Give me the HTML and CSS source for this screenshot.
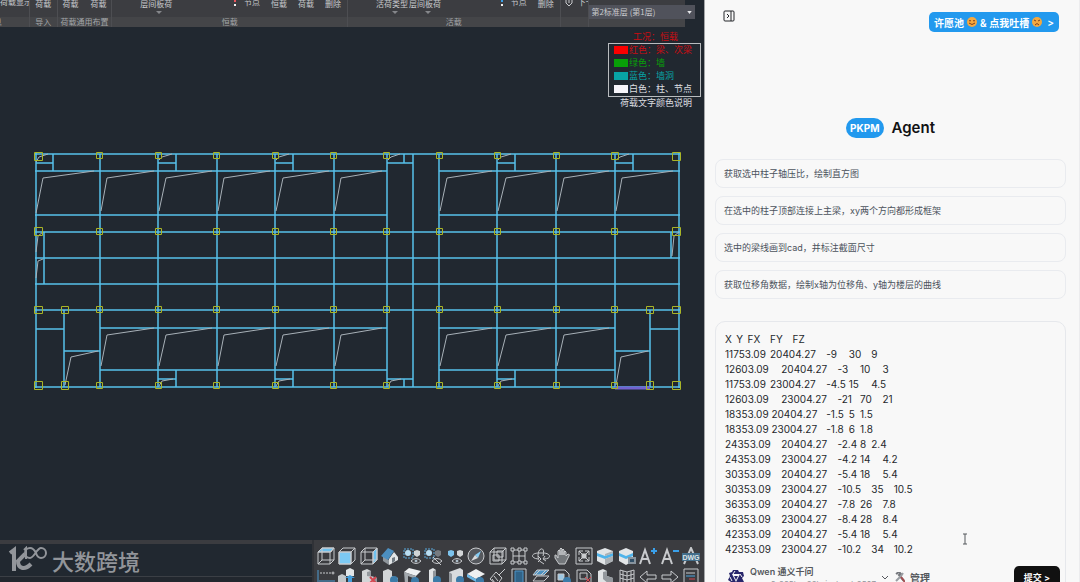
FILE: index.html
```html
<!DOCTYPE html>
<html lang="zh-CN">
<head>
<meta charset="utf-8">
<meta name="viewport" content="width=device-width, initial-scale=1">
<title>PKPM Agent</title>
<link rel="stylesheet" href="styles.css">
</head>
<body>
<div class="app">
  <main class="cad">
    <header class="ribbon">
      <div class="groups">
        <section class="group g-show"><div class="tools"><button class="tool cut">荷载显示</button></div><h2 class="caption left">息</h2></section>
        <section class="group g-import"><div class="tools center"><button class="tool">荷载</button></div><h2 class="caption">导入</h2></section>
        <section class="group g-common"><div class="tools center spaced"><button class="tool">荷载</button><button class="tool">荷载</button></div><h2 class="caption">荷载通用布置</h2></section>
        <section class="group g-dead">
          <div class="tools end">
            <button class="tool drop first">层间板荷</button>
            <button class="tool node dots red">节点</button><button class="tool">恒载</button><button class="tool">荷载</button><button class="tool">删除</button>
          </div>
          <h2 class="caption">恒载</h2>
        </section>
        <section class="group g-live">
          <div class="tools end">
            <div class="pair"><button class="tool drop">活荷类型</button><button class="tool drop">层间板荷</button></div>
            <button class="tool node dots blue">节点</button><button class="tool">删除</button>
          </div>
          <h2 class="caption">活载</h2>
        </section>
        <section class="group g-next"><div class="tools next"><svg class="diamond" viewBox="0 0 8 8"><path d="M1 0v3l3 3 3-3V0M4 0v3" fill="none" stroke="#c8cacd"/></svg><button class="tool cut">下一</button></div><h2 class="caption"></h2></section>
        <section class="group g-floor"><div class="tools"></div><h2 class="caption"></h2></section>
      </div>
      <select class="floor" aria-label="标准层"><option>第2标准层 (第1层)</option></select>
      <svg class="floor-arrow" viewBox="0 0 6 4"><path d="M0 0h6L3 4z" fill="#e6e8ea"/></svg>
    </header>

    <div class="canvas">
      <svg class="plan" viewBox="0 27 704 513" role="img" aria-label="结构平面图">
        <g class="halo">
          <path d="M35 154H680M35 171H387M439 171H680M35 215H387M439 215H680M35 232H680M35 258H680M35 284H680M35 310H680M100 328H387M439 328H615M100 370H387M439 370H615M35 387H680"/>
          <path d="M36 153V388M100 154V387M158 154V387M217 154V387M275 154V387M334 154V387M387 154V387M413 154V387M439 154V387M497 154V387M556 154V387M615 154V387M679 153V388"/>
          <path d="M53 154V171M36 163H53M176 154V171M158 163H176M293 154V171M275 163H293M404 154V163M387 163H413M515 154V171M497 163H515M633 154V171M615 163H633"/>
          <path d="M176 370V387M158 379H176M293 370V387M275 379H293M404 379V387M387 379H413M515 370V387M497 379H515"/>
          <path d="M44 232V284M671 232V258M64 310V387M36 329H64M64 351H100M650 310V387M650 329H679M615 351H650"/>
        </g>
        <g class="slabs">
          <path d="M36 213L43 178 94 171M101 211L107 178 154 171M159 211L166 178 212 171M218 211L224 178 270 171M276 211L283 178 329 171M335 211L341 178 382 171M440 211L447 178 492 171M498 211L506 178 551 171M557 211L564 178 609 171M616 211L622 178 673 171"/>
          <path d="M101 366L107 335 154 328M159 366L166 335 212 328M218 366L224 335 270 328M276 366L283 335 329 328M335 366L341 335 382 328M440 366L447 335 492 328M498 366L506 335 551 328M557 366L564 335 609 328M65 385L71 357 98 351M616 385L621 357 648 351"/>
          <path d="M36 162L39 157 48 154M159 160L162 157 172 154M276 160L279 157 289 154M388 160L391 157 400 154M498 160L501 157 511 154M616 160L620 157 629 154M159 386L162 381 173 379M276 386L279 381 290 379M388 386L391 381 401 379M498 386L501 381 512 379M36 252L38 236 43 232M36 278L38 261 43 259M672 256L674 236 679 232"/>
        </g>
        <path class="picked" d="M615 388H650"/>
        <g class="joints">
          <path d="M96 152h6v6h-6zM155 152h6v6h-6zM213 152h6v6h-6zM272 152h6v6h-6zM330 152h6v6h-6zM383 152h6v6h-6zM436 152h6v6h-6zM494 152h6v6h-6zM553 152h6v6h-6zM611 152h7v7h-7z"/>
          <path d="M96 228h6v6h-6zM155 228h6v6h-6zM213 228h6v6h-6zM272 228h6v6h-6zM330 228h6v6h-6zM383 228h6v6h-6zM436 228h6v6h-6zM494 228h6v6h-6zM553 228h6v6h-6zM611 228h6v6h-6z"/>
          <path d="M96 306h6v6h-6zM155 306h6v6h-6zM213 306h6v6h-6zM272 306h6v6h-6zM330 306h6v6h-6zM383 306h6v6h-6zM436 306h6v6h-6zM494 306h6v6h-6zM553 306h6v6h-6zM611 306h6v6h-6z"/>
          <path d="M96 382h6v6h-6zM155 382h6v6h-6zM213 382h6v6h-6zM272 382h6v6h-6zM330 382h6v6h-6zM383 382h6v6h-6zM436 382h6v6h-6zM494 382h6v6h-6zM553 382h6v6h-6zM611 382h6v6h-6z"/>
          <path d="M34 152h8v8h-8zM34 227h8v8h-8zM34 306h8v7h-8zM34 381h8v8h-8zM61 306h7v7h-7zM61 381h7v8h-7zM672 152h8v8h-8zM672 227h8v8h-8zM672 306h8v7h-8zM672 381h8v8h-8zM646 306h7v7h-7zM646 381h7v8h-7z"/>
        </g>
      </svg>
      <aside class="legend">
        <p class="case">工况：恒载</p>
        <ul class="keys">
          <li class="key beam">红色：梁、次梁</li>
          <li class="key wall">绿色：墙</li>
          <li class="key hole">蓝色：墙洞</li>
          <li class="key column">白色：柱、节点</li>
        </ul>
        <p class="note">荷载文字颜色说明</p>
      </aside>
    </div>

    <footer class="dock">
      <div class="command">
        <div class="history">
          <svg class="mark" viewBox="0 0 40 28" fill="none" stroke="#92959a">
            <path d="M2 7L6 4V25" stroke-width="4"/>
            <path d="M17 8L10 15C10 22 16 25 23 18" stroke-width="4"/>
            <path d="M16 4L18 2V13" stroke-width="2"/>
            <path d="M28 7C26 3 24 2 22 2A5 5 0 1 0 22 12C26 12 29 2 33 2A5 5 0 1 1 33 12C31 12 29 10 28 7" stroke-width="2"/>
          </svg>
          <span class="brand">大数跨境</span>
        </div>
      </div>
      <div class="views">
        <button aria-label="俯视"><svg viewBox="0 0 18 18"><path d="M1 5L5 1H17L14 5Z" fill="#6ec1ee"/><path d="M1 5H13V17H1ZM1 5L5 1H17V13L13 17M13 5L17 1M5 1V13H17M1 17L5 13"/></svg></button>
        <button aria-label="前视"><svg viewBox="0 0 18 18"><path d="M1 5H13V17H1Z" fill="#7cc9f3"/><path d="M1 5H13V17H1ZM1 5L5 1H17V13L13 17M13 5L17 1"/></svg></button>
        <button aria-label="右视"><svg viewBox="0 0 18 18"><path d="M13 5L17 1V13L13 17Z" fill="#6ec1ee"/><path d="M1 5H13V17H1ZM1 5L5 1H17V13L13 17M13 5L17 1M5 1V13H17M1 17L5 13"/></svg></button>
        <button aria-label="主视图"><svg viewBox="0 0 18 18" stroke="none"><path d="M2 9L8 13V18L2 14Z" fill="#8f969c"/><path d="M8 12L13 5 17 10V13L8 18Z" fill="#e2e5e7"/><path d="M0 9L7 1 13 4 7 13Z" fill="#4c8fc0"/><path d="M11 11l3-1v4l-3 2z" fill="#707981"/></svg></button>
        <button aria-label="隔离"><svg viewBox="0 0 18 18"><rect x="1" y="2" width="9" height="9" stroke="#5aa9dc" stroke-dasharray="2 1"/><circle cx="5" cy="6" r="3" fill="#b9def2" stroke="none"/><path d="M11 4l3-1 3 1v4l-3 2-3-2z" fill="#d2d5d7" stroke="none"/><path d="M8 14q5-5 10 0q-5 5-10 0z"/><circle cx="13" cy="14" r="1" fill="#5ab4ed"/></svg></button>
        <button aria-label="隐藏"><svg viewBox="0 0 18 18"><rect x="1" y="2" width="9" height="9" stroke="#5aa9dc" stroke-dasharray="2 1"/><circle cx="5" cy="6" r="3" fill="#b9def2" stroke="none"/><path d="M11 4l3-1 3 1v4l-3 2-3-2z" fill="#777b80" stroke="none"/><path d="M8 14q5-5 10 0q-5 5-10 0zM9 10l8 8"/></svg></button>
        <button aria-label="显示全部"><svg viewBox="0 0 18 18"><path d="M2 4l3-1 3 1v4l-3 2-3-2z" fill="#7dc4ee" stroke="none"/><path d="M11 4l3-1 3 1v4l-3 2-3-2z" fill="#d2d5d7" stroke="none"/><path d="M6 14q5-5 10 0q-5 5-10 0z"/><circle cx="11" cy="14" r="1" fill="#5ab4ed"/></svg></button>
        <button aria-label="导航"><svg viewBox="0 0 18 18"><circle cx="9" cy="9" r="8" fill="#55585d"/><path d="M14 4L11 11 8 8Z" fill="#86cdf5" stroke="none"/><path d="M4 14L8 8 11 11Z" fill="#d8dadc" stroke="none"/></svg></button>
        <button aria-label="线框"><svg viewBox="0 0 18 18"><path d="M1 5H13V17H1ZM1 5L5 1H17V13L13 17M13 5L17 1M4 8H10V14H4ZM5 1V13H17M8 4H14V10H8Z"/></svg></button>
        <button aria-label="夹点"><svg viewBox="0 0 18 18"><path d="M3 3H15V15H3ZM9 3V15M3 9H15"/><path d="M1 1h3v3H1zM14 1h3v3h-3zM1 14h3v3H1zM14 14h3v3h-3zM8 1h3v3H8zM8 14h3v3H8z" fill="#3b3c40"/></svg></button>
        <button aria-label="动态观察"><svg viewBox="0 0 18 18"><path d="M6 12C-2 11-1 6 7 6H11C19 6 20 12 12 12M9 15C5 14 5 3 9 2C12 1 12 6 11 9M6 9l3 3-3 3M9 15l3 2M13 9l-2 3 3 2"/></svg></button>
        <button aria-label="平移"><svg viewBox="0 0 18 18"><path d="M5 11V4q1-2 2 0V8 2q1-2 2 0V8 3q1-2 2 0V8 5q1-2 2 0V9l2-2q2 0 1 2l-4 8H6L2 11V8q1-1 3 3" fill="#73777b"/></svg></button>
        <button aria-label="全图"><svg viewBox="0 0 18 18"><path d="M1 1H17V17H1ZM4 8V4H8M4 4l4 4M10 4h4v4M14 4l-4 4M4 10v4h4M4 14l4-4M14 10v4h-4M14 14l-4-4"/><path d="M7 7h4v4H7z" fill="#c8cacd"/></svg></button>
        <button aria-label="楼层"><svg viewBox="0 0 18 18" stroke="none"><path d="M1 4L9 1 17 4V14L9 18 1 14Z" fill="#e2e5e7"/><path d="M1 6L9 9V12L1 9ZM9 9L17 6V9L9 12Z" fill="#4fb3ea"/><path d="M9 7V9L17 6V4ZM9 12V18L17 14V9Z" fill="#abb0b4"/></svg></button>
        <button aria-label="楼层组装"><svg viewBox="0 0 18 18" stroke="none"><path d="M1 4L8 1 15 4V14L8 18 1 14Z" fill="#e2e5e7"/><path d="M1 6L8 9V12L1 9ZM8 9L15 6V9L8 12Z" fill="#4fb3ea"/><path d="M10 10h8v7h-8z" fill="#87939d"/><path d="M12 12h4v3h-4z" fill="#315068"/></svg></button>
        <button aria-label="增大字号"><svg viewBox="0 0 18 18"><path d="M1 17L6 3 11 17M3 12H9" stroke-width="2"/><path d="M12 4h6M15 1v6" stroke="#3aa0ea" stroke-width="2"/></svg></button>
        <button aria-label="减小字号"><svg viewBox="0 0 18 18"><path d="M1 17L6 3 11 17M3 12H9" stroke-width="2"/><path d="M12 4h6" stroke="#3aa0ea" stroke-width="2"/></svg></button>
        <button aria-label="导出DWG"><svg viewBox="0 0 18 18"><path d="M2 17L9 1 16 17" stroke-width="2"/><path d="M0 6h18v8H0z" fill="#426e8b" stroke="none"/><text x="9" y="13" class="dwg">DWG</text></svg></button>

        <button aria-label="标尺"><svg viewBox="0 0 18 18"><path d="M1 2V18M2 13H18" stroke="#4e9bd2"/><path d="M3 5H14" stroke-dasharray="2 1"/><circle cx="16" cy="5" r="1"/></svg></button>
        <button aria-label="节点显示"><svg viewBox="0 0 18 18" stroke="none"><path d="M8 2l4-2 4 2v6H8z" fill="#e2e5e7"/><path d="M0 8l4-2 4 2v6H0z" fill="#c3c7ca"/><path d="M12 7l5 3h-3v5h-4v-5H7z" fill="#459edb"/></svg></button>
        <button aria-label="删除构件"><svg viewBox="0 0 18 18" stroke="none"><path d="M2 3l5-2 4 2v5l6 2v6H2z" fill="#d2d5d7"/><path d="M11 3v5l6 2v6h-4V9L7 8V4z" fill="#93989d"/><path d="M10 9l6 6m0-6l-6 6" stroke="#d44650" stroke-width="2"/></svg></button>
        <button aria-label="构件"><svg viewBox="0 0 18 18" stroke="none"><path d="M2 3l5-2 4 2v5l6 2v6H2z" fill="#d2d5d7"/><circle cx="13" cy="12" r="4" fill="#3c7ba8"/></svg></button>
        <button aria-label="梁"><svg viewBox="0 0 18 18" stroke="none"><path d="M1 4L6 0 18 3 13 8Z" fill="#eef0f1"/><path d="M1 4L13 8V11L5 8V16H2Z" fill="#a3a9ae"/><circle cx="12" cy="13" r="4" fill="#3c7ba8"/></svg></button>
        <button aria-label="柱"><svg viewBox="0 0 18 18" stroke="none"><path d="M5 2l4-2 3 2v14H5z" fill="#e2e5e7"/><path d="M9 3l3-1v14H9z" fill="#92979c"/><circle cx="13" cy="12" r="4" fill="#3c7ba8"/></svg></button>
        <button aria-label="墙"><svg viewBox="0 0 18 18" stroke="none"><path d="M3 4L14 0 17 2V13L3 18Z" fill="#d9dcde"/><path d="M3 4L6 6V18H3Z" fill="#92979c"/><circle cx="14" cy="12" r="4" fill="#3c7ba8"/></svg></button>
        <button aria-label="板"><svg viewBox="0 0 18 18" stroke="none"><path d="M0 6L9 1 18 6 9 11Z" fill="#eef0f1"/><path d="M0 6L9 11V14L0 9Z" fill="#6cb7e5"/><circle cx="13" cy="13" r="4" fill="#3c7ba8"/></svg></button>
        <button aria-label="格式刷"><svg viewBox="0 0 18 18"><path d="M16 1L10 7M7 4L13 10 8 17 1 11ZM5 8l4 5M3 11l3 4"/></svg></button>
        <button aria-label="门洞"><svg viewBox="0 0 18 18"><path d="M2 1H16V18H2Z"/><path d="M5 3H13V18H5Z" fill="#316387" stroke="#4c94c7"/></svg></button>
        <button aria-label="坡面"><svg viewBox="0 0 18 18"><path d="M1 7L5 2H17L12 7Z" fill="#4d91bf"/><path d="M1 13L5 8H17L12 13ZM8 2L3 7M14 2L9 7"/></svg></button>
        <button aria-label="图纸"><svg viewBox="0 0 18 18"><path d="M2 2H12L16 6V18H2Z"/><path d="M5 6h6v6H5z" fill="#9dc8e4"/><circle cx="14" cy="13" r="4" fill="#3c7ba8" stroke="none"/></svg></button>
        <button aria-label="关闭图纸"><svg viewBox="0 0 18 18"><path d="M2 2H12L16 6V18H2ZM5 5h7v6H5z"/><path d="M10 9l6 6m0-6l-6 6" stroke="#d44650"/></svg></button>
        <button aria-label="台阶"><svg viewBox="0 0 18 18" stroke="none"><path d="M2 3l5-2 4 2v5l6 2v6H2z" fill="#e0e3e5"/><path d="M7 4l4-1v5l6 2v6h-4l-6-5z" fill="#93989d"/></svg></button>
        <button aria-label="网格"><svg viewBox="0 0 18 18"><path d="M2 2L9 4 16 2V17H2ZM2 6L9 8 16 6M2 10L9 12 16 10M9 4V17M5 3V17M13 3V17"/></svg></button>
        <button aria-label="后退"><svg viewBox="0 0 18 18"><path d="M1 9L8 3V7H17V11H8V15Z"/></svg></button>
        <button aria-label="前进"><svg viewBox="0 0 18 18"><path d="M17 9L10 3V7H1V11H10V15Z"/></svg></button>
        <button aria-label="列表"><svg viewBox="0 0 18 18"><path d="M2 1H16V18H2ZM4 5H13"/><path d="M4 8H13" stroke="#4ca4df"/><path d="M7 11H13" stroke="#d44650"/></svg></button>
      </div>
    </footer>
  </main>

  <aside class="agent">
    <header class="bar">
      <button class="collapse" aria-label="收起侧栏"><svg viewBox="0 0 12 12" fill="none" stroke="#24262a"><rect x="1" y="1" width="10" height="10" rx="1"/><path d="M8 1V11M4 4L6 6 4 8"/></svg></button>
      <a class="wish" href="#wish">许愿池<svg class="face" viewBox="0 0 10 10"><circle cx="5" cy="5" r="5" fill="#f4a83f"/><path d="M2 4q1-1 2 0M6 4q1-1 2 0M2 6q3 3 6 0" fill="none" stroke="#7d3f1c"/></svg>
        &amp; 点我吐槽<svg class="face" viewBox="0 0 10 10"><circle cx="5" cy="5" r="5" fill="#f4a83f"/><path d="M2 3l2 1M8 3L6 4M3 8q2-3 4 0" fill="none" stroke="#7d3f1c"/></svg>
        <span class="more">&gt;</span></a>
    </header>

    <h1 class="title"><span class="pill">PKPM</span>Agent</h1>

    <div class="prompts">
      <button class="prompt">获取选中柱子轴压比，绘制直方图</button>
      <button class="prompt">在选中的柱子顶部连接上主梁，xy两个方向都形成框架</button>
      <button class="prompt">选中的梁线画到cad，并标注截面尺寸</button>
      <button class="prompt">获取位移角数据，绘制x轴为位移角、y轴为楼层的曲线</button>
    </div>

    <form class="composer">
      <textarea class="entry" rows="15" aria-label="输入内容" spellcheck="false">X	Y	FX	FY	FZ
11753.09	20404.27	-9	30	9
12603.09	20404.27	-3	10	3
11753.09	23004.27	-4.5	15	4.5
12603.09	23004.27	-21	70	21
18353.09 20404.27	-1.5	5	1.5
18353.09 23004.27	-1.8	6	1.8
24353.09	20404.27	-2.4	8	2.4
24353.09	23004.27	-4.2	14	4.2
30353.09	20404.27	-5.4	18	5.4
30353.09	23004.27	-10.5	35	10.5
36353.09	20404.27	-7.8	26	7.8
36353.09	23004.27	-8.4	28	8.4
42353.09	20404.27	-5.4	18	5.4
42353.09	23004.27	-10.2	34	10.2</textarea>
      <div class="actions">
        <button type="button" class="model">
          <svg class="qwen" viewBox="0 0 18 18"><path d="M6 1H11L12 3H16L17 7 15 9 17 13 14 16H10L8 17 5 16 4 13 1 11 3 7 2 4 5 3Z" fill="#28266b"/><path d="M5 5H13L9 13Z" fill="#f8f8f8"/><path d="M8 2L6 5M3 8l2 4M15 8l-2-3M9 14h4" fill="none" stroke="#f8f8f8"/><path d="M7 7h4l-2 4z" fill="#28266b"/></svg>
          <span class="names"><strong>Qwen 通义千问</strong><small>qwen3-235b-a22b-instruct-2507</small></span>
          <svg class="chevron" viewBox="0 0 8 8"><path d="M1 2l3 3 3-3" fill="none" stroke="#55585d"/></svg>
        </button>
        <button type="button" class="manage"><svg class="kit" viewBox="0 0 10 10"><path d="M1 2l3-2 2 2-2 1 5 6" fill="none" stroke="#74777c" stroke-width="2"/><path d="M8 1L6 4 1 9" fill="none" stroke="#9a9ea3" stroke-width="2"/><path d="M6 5l4 5" stroke="#a34d50" stroke-width="2"/></svg>管理</button>
        <button type="submit" class="submit">提交 &gt;</button>
      </div>
      <svg class="ibeam" viewBox="0 0 6 12"><path d="M1 1h4M3 1v10M1 11h4" fill="none" stroke="#55585d"/></svg>
    </form>
  </aside>
</div>
</body>
</html>
```
FILE: styles.css
```css
* { box-sizing: border-box; }

body {
  margin: 0;
  background: #f8f8f8;
  font-family: Inter, "Noto Sans CJK SC", sans-serif;
}

button {
  margin: 0;
  padding: 0;
  border: 0;
  background: none;
  color: inherit;
  font: inherit;
}

h1, h2, p, ul { margin: 0; padding: 0; font-weight: normal; }

svg { display: block; }

.app {
  display: grid;
  grid-template-columns: 705fr 375fr;
  grid-template-rows: minmax(0, 1fr);
  height: 100vh;
  overflow: hidden;
}

/* Drawing editor */

.cad {
  display: grid;
  grid-template-columns: minmax(0, 1fr);
  grid-template-rows: 27px minmax(0, 1fr) 42px;
  min-width: 0;
  background: #212830;
  border-right: 1px solid #a4a6a8;
  font-family: "Noto Sans CJK SC", sans-serif;
}

.ribbon {
  position: relative;
  overflow: hidden;
  color: #c8cacd;
  font-size: 8px;
}

.groups {
  display: flex;
  width: 97.3%;
  height: 100%;
}

.group {
  display: grid;
  grid-template-rows: 17px 10px;
  min-width: 0;
  background: #3c3d41;
  border-right: 1px solid #4d4e52;
  overflow: hidden;
}

.g-show { flex: 29 0 0; }
.g-import { flex: 27 0 0; }
.g-common { flex: 54 0 0; }
.g-dead { flex: 236 0 0; }
.g-live { flex: 213 0 0; }
.g-next { flex: 27 0 0; }
.g-floor { flex: 97 0 0; border-right: 0; }

.tools { display: flex; height: 17px; white-space: nowrap; }
.tools.center { justify-content: center; }
.tools.spaced { gap: 12px; }
.tools.end { justify-content: flex-end; gap: 11px; padding-right: 6px; }
.tools.next { gap: 5px; padding-left: 4px; }

.tool {
  display: flex;
  position: relative;
  flex: none;
  height: 8px;
  line-height: 8px;
}

.tool.cut, .tool.node { height: 4px; line-height: 4px; }
.tool.first, .pair { margin: 0 auto 0 28px; }
.pair { display: flex; gap: 1px; }

.drop::after {
  content: "";
  position: absolute;
  top: 11px;
  left: 50%;
  border: 3px solid transparent;
  border-top-color: #85878b;
}

.dots::before {
  content: "";
  width: 2px;
  height: 6px;
  margin-right: 8px;
  background: linear-gradient(#e8555b 2px, transparent 2px 4px, #f2f2f2 4px);
}

.dots.blue::before { background: linear-gradient(#3aa0ea 2px, transparent 2px 4px, #f2f2f2 4px); }

.diamond { width: 8px; height: 8px; }

.caption {
  background: #444548;
  color: #a3a5a8;
  font-size: 8px;
  line-height: 10px;
  text-align: center;
  white-space: nowrap;
}

.caption.left { text-align: left; text-indent: -6px; }

.floor {
  position: absolute;
  top: 5px;
  right: 9px;
  width: 15%;
  height: 14px;
  padding: 0 2px;
  border: 0;
  border-radius: 0;
  appearance: none;
  background: #50525b;
  color: #c8cacd;
  font: 8px/14px "Noto Sans CJK SC", sans-serif;
}

.floor-arrow { position: absolute; top: 11px; right: 12px; width: 5px; height: 3px; }

.canvas { position: relative; min-height: 0; }
.plan { width: 100%; height: 100%; fill: none; }
.halo { stroke: #57c1ea; stroke-width: 1.5; }
.slabs { stroke: #a8b1b8; stroke-width: 1; }
.joints { stroke: #a9b527; stroke-width: 1; }
.joints path { transform: translate(0.5px, 0.5px); }
.picked { stroke: #7262cf; stroke-width: 3; }

.legend {
  position: absolute;
  top: 4px;
  right: 3px;
  width: 93px;
  color: #dcdee0;
  font-size: 9px;
  line-height: 12px;
}

.case { padding-left: 25px; color: #c90d12; }
.keys { border: 1px solid #b9bcbf; list-style: none; }
.key { display: flex; align-items: center; height: 13px; padding: 0 0 1px 5px; }

.key::before {
  content: "";
  width: 14px;
  height: 8px;
  margin-right: 1px;
  background: currentColor;
}

.beam { color: #c90d12; }
.beam::before { background: #fb0000; }
.wall { color: #08a008; }
.hole { color: #08a3a5; }
.column::before { background: #f7f5fa; }
.note { padding-left: 12px; }

.dock {
  display: grid;
  grid-template-columns: 314fr 390fr;
  min-width: 0;
  background: #3b3c40;
  overflow: hidden;
}

.command { padding-top: 4px; background: #3b3c40; border-right: 2px solid #303237; }

.history {
  display: flex;
  align-items: center;
  gap: 4px;
  height: 33px;
  padding-left: 8px;
  background: #212830;
  border-bottom: 1px solid #3b3f45;
}

.command::after { content: ""; display: block; height: 8px; background: #22272e; }
.mark { width: 40px; height: 28px; }
.brand { color: #92959a; font-size: 22px; font-weight: 500; line-height: 32px; }

.views {
  display: grid;
  grid-template-columns: repeat(18, minmax(0, 1fr));
  grid-auto-rows: 18px;
  gap: 3px 0;
  justify-items: center;
  padding: 7px 2px 0 1px;
}

.views svg { width: 18px; height: 18px; fill: none; stroke: #c8cacd; }
.views svg[stroke="none"] { stroke: none; }
.dwg { fill: #dfe3e6; stroke: none; font: bold 7px "Liberation Sans", sans-serif; text-anchor: middle; }

/* Assistant panel */

.agent {
  display: flex;
  flex-direction: column;
  min-width: 0;
  padding: 10px 13px 0 10px;
  color: #25282c;
  border-right: 1px solid #ececee;
}

.bar { display: flex; justify-content: space-between; padding: 0 7px 0 8px; }
.collapse { width: 12px; height: 12px; }
.collapse svg { width: 12px; height: 12px; }

.wish {
  display: flex;
  align-items: center;
  gap: 3px;
  height: 20px;
  margin-top: 2px;
  padding: 0 5px;
  border-radius: 5px;
  background: #2299ee;
  color: #fff;
  font-size: 10px;
  font-weight: 600;
  text-decoration: none;
  white-space: nowrap;
}

.face { width: 10px; height: 10px; }
.more { padding-left: 2px; }

.title {
  display: flex;
  align-items: center;
  justify-content: center;
  gap: 8px;
  margin-top: 86px;
  color: #111214;
  font-size: 15px;
  font-weight: 600;
  line-height: 20px;
}

.pill {
  padding: 0 4px;
  border-radius: 10px;
  background: #2299ee;
  color: #fff;
  font-size: 10px;
  font-weight: 700;
}

.prompts { display: grid; gap: 8px; margin-top: 21px; }

.prompt {
  height: 29px;
  padding: 0 8px 1px;
  border: 1px solid #e9ebef;
  border-radius: 8px;
  color: #4b525c;
  font-size: 9px;
  text-align: left;
}

.composer {
  position: relative;
  flex: none;
  margin-top: 22px;
  padding: 10px 5px 8px 9px;
  border: 1px solid #e6e8ec;
  border-radius: 10px;
}

.entry {
  display: block;
  width: 100%;
  padding: 0;
  border: 0;
  outline: 0;
  resize: none;
  overflow: hidden;
  background: none;
  color: #25282c;
  font: 10px/15px Inter, "Noto Sans CJK SC", sans-serif;
  tab-size: 4;
}

.actions { display: flex; align-items: flex-start; margin-top: 9px; color: #55585d; }
.model { display: flex; align-items: center; gap: 5px; height: 24px; padding-left: 2px; text-align: left; }
.qwen { width: 18px; height: 18px; }
.names { display: grid; font-size: 9px; line-height: 12px; }
.names strong { font-weight: 600; }
.names small { color: #90949a; font-size: 8px; line-height: 12px; }
.chevron { width: 8px; height: 8px; }

.manage {
  display: flex;
  align-items: center;
  gap: 5px;
  height: 22px;
  margin-left: 6px;
  font-size: 10px;
  font-weight: 600;
}

.kit { width: 10px; height: 10px; }

.submit {
  height: 22px;
  margin-left: auto;
  padding: 0 10px;
  border-radius: 5px;
  background: #111;
  color: #fff;
  font-size: 9px;
  font-weight: 600;
}

.ibeam { position: absolute; right: 97px; top: 211px; width: 6px; height: 12px; }
```
